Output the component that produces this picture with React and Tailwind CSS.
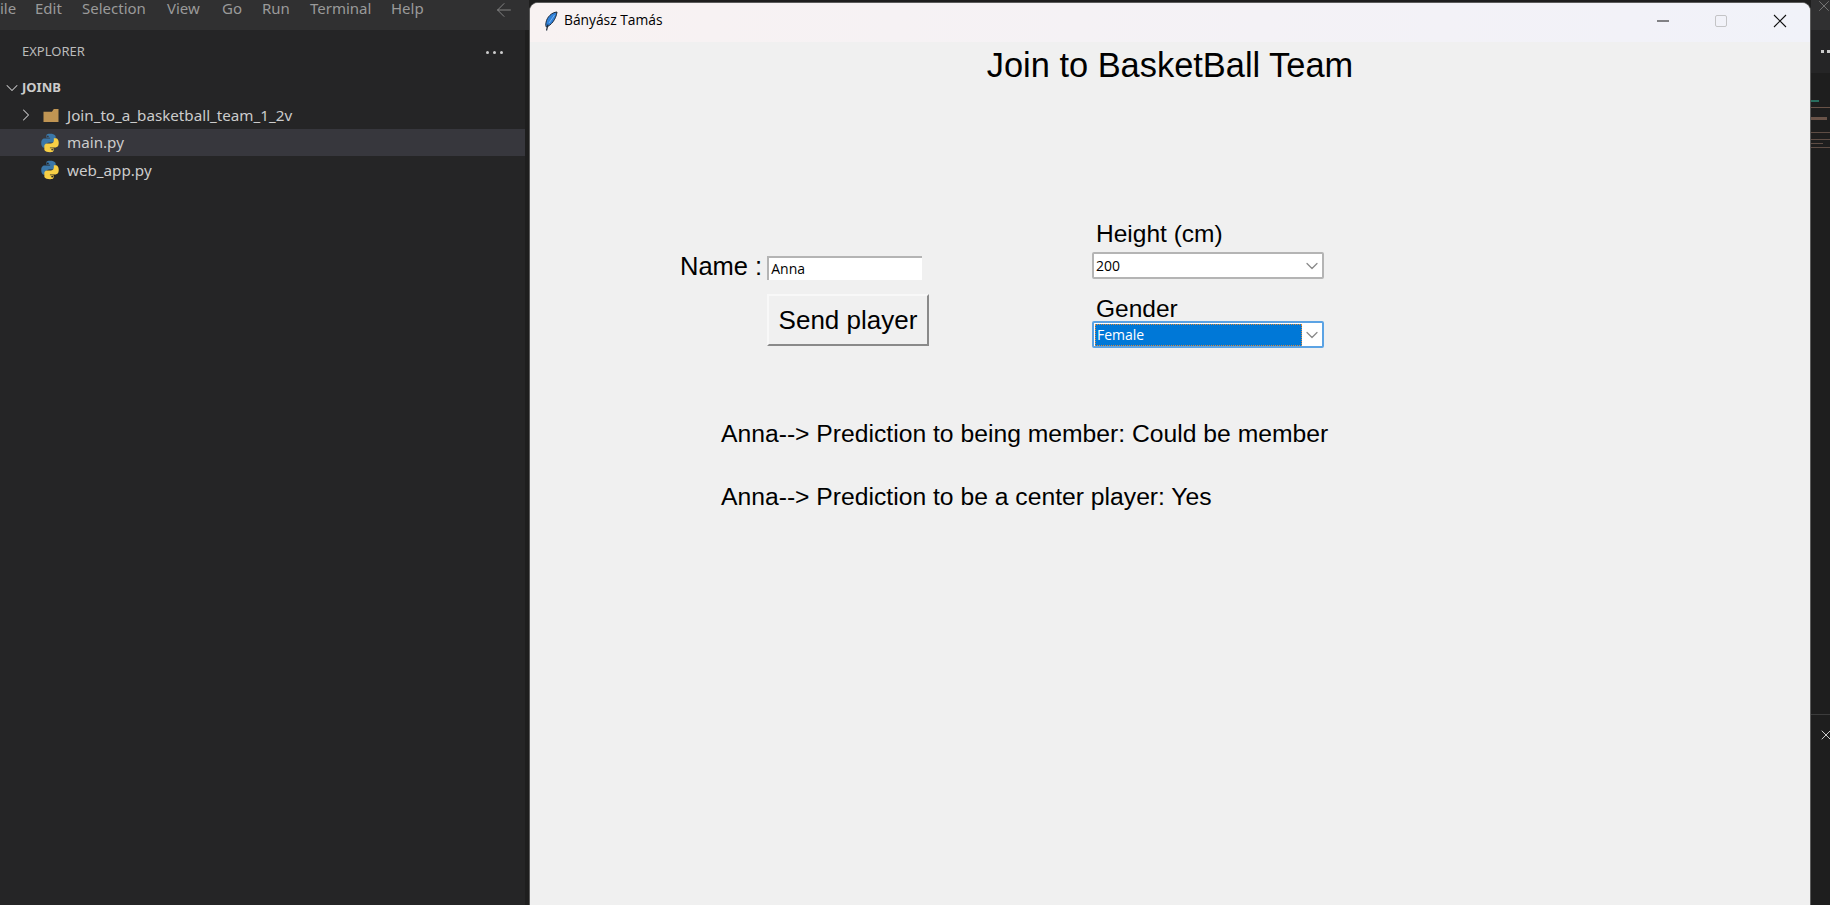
import React from "react";
import { ChevronDown, ChevronRight, ArrowLeft, X } from "lucide-react";

const menus = [
  { label: "ile", cls: "w-[35px]" },
  { label: "Edit", cls: "w-[47px]" },
  { label: "Selection", cls: "w-[85px]" },
  { label: "View", cls: "w-[55px]" },
  { label: "Go", cls: "w-[40px]" },
  { label: "Run", cls: "w-[48px]" },
  { label: "Terminal", cls: "w-[81px]" },
  { label: "Help", cls: "w-[50px]" },
];

function PythonIcon() {
  return (
    <svg viewBox="0 0 24 24" className="w-[20px] h-[20px] shrink-0">
      <path fill="#3b77a8" d="M11.900 1C7.400 1 7.700 3 7.700 3v2.800h4.400v.9H5.800S1.500 6.200 1.500 12s3.700 5.700 3.700 5.700h2.200v-2.800s-.1-3.600 3.500-3.600h4.500s3.400 0 3.400-3.300V4.400S19 1 11.900 1zM9.400 3a1.100 1.100 0 110 2.200 1.100 1.100 0 010-2.200z" />
      <path fill="#f7cf45" d="M12.100 23c4.500 0 4.200-2 4.200-2v-2.800h-4.400v-.9h6.300s4.300.5 4.300-5.300-3.700-5.700-3.700-5.700h-2.200v2.800s.1 3.600-3.500 3.600H8.600s-3.400 0-3.400 3.300v3.600S5 23 12.100 23zm2.500-2a1.100 1.100 0 110-2.200 1.100 1.100 0 010 2.200z" />
    </svg>
  );
}

function FolderIcon() {
  return (
    <svg viewBox="0 0 18 16" className="w-[18px] h-[15px] shrink-0">
      <path fill="#c09553" d="M1 4h9l2-3h5v14H1z" />
    </svg>
  );
}

function FeatherIcon() {
  return (
    <svg viewBox="0 0 14 20" className="w-[14px] h-[20px] shrink-0">
      <path fill="#2f80d8" stroke="#1d2a3a" strokeWidth="1" d="M13 1C7.500 1.500 3 6 2 11.500c-.4 2-.2 3.500.3 4.500C7 14.500 12 8.500 13 1z" />
      <path fill="none" stroke="#8cc2f2" strokeWidth="0.800" d="M10.500 4 5 12" />
      <path fill="none" stroke="#1d2a3a" strokeWidth="1.200" d="M4 13.500 2.500 19.500" />
    </svg>
  );
}

function WindowButtons() {
  return (
    <div className="flex items-center text-black">
      <svg viewBox="0 0 14 14" className="w-[14px] h-[14px]">
        <path d="M1 7h12" stroke="#111" strokeWidth="1" />
      </svg>
      <svg viewBox="0 0 14 14" className="w-[14px] h-[14px] ml-[44px]">
        <rect x="1.500" y="1.500" width="11" height="11" rx="1.500" fill="none" stroke="#c4c4c6" strokeWidth="1" />
      </svg>
      <svg viewBox="0 0 14 14" className="w-[14px] h-[14px] ml-[45px] mr-[23px]">
        <path d="M1 1l12 12M13 1L1 13" stroke="#111" strokeWidth="1.100" />
      </svg>
    </div>
  );
}

function Combo({ value, focused }) {
  return (
    <div
      className={
        "flex items-center w-[232px] h-[27px] rounded-[2px] border-2 bg-white " +
        (focused ? "border-[#5ba3e4]" : "border-[#b4b4b4]")
      }
    >
      {focused ? (
        <div className="flex items-center flex-1 h-[22px] ml-px pl-[1px] bg-[#0078d7] text-white border border-dotted border-[#d98a3d]">
          {value}
        </div>
      ) : (
        <div className="flex-1 pl-[2px] text-black">{value}</div>
      )}
      <ChevronDown className="w-[20px] h-[20px] text-[#8a8a8a]" strokeWidth={1.500} />
    </div>
  );
}

export default function App() {
  return (
    <div className="flex h-[905px] w-[1830px] overflow-hidden bg-[#1e1e1e] font-['Noto_Sans',sans-serif]">
      <div className="flex flex-col w-[529px] shrink-0">
        <div className="flex items-start h-[30px] bg-[#303031] text-[15px] leading-[16px] text-[#9a9a9a] shrink-0">
          {menus.map((m) => (
            <div key={m.label} className={m.cls}>
              {m.label}
            </div>
          ))}
          <ArrowLeft className="w-[22px] h-[22px] ml-[52px] -mt-px text-[#8a8a8a]" strokeWidth={1} />
        </div>
        <div className="flex-1 w-[525px] bg-[#252526] text-[15.200px] text-[#cccccc]">
          <div className="flex items-center justify-between h-[44px] pl-[22px] pr-[22px] text-[13px] text-[#bbbbbb]">
            <span>EXPLORER</span>
            <div className="flex gap-[4px]">
              <span className="w-[3px] h-[3px] rounded-full bg-[#cccccc]" />
              <span className="w-[3px] h-[3px] rounded-full bg-[#cccccc]" />
              <span className="w-[3px] h-[3px] rounded-full bg-[#cccccc]" />
            </div>
          </div>
          <div className="flex items-center h-[27px] font-bold text-[13px] text-[#cccccc]">
            <ChevronDown className="w-[20px] h-[20px] ml-[2px]" strokeWidth={1.250} />
            <span>JOINB</span>
          </div>
          <div className="flex items-center h-[28px]">
            <ChevronRight className="w-[20px] h-[20px] ml-[16px] mr-[6px]" strokeWidth={1.250} />
            <FolderIcon />
            <span className="ml-[7px]">Join_to_a_basketball_team_1_2v</span>
          </div>
          <div className="flex items-center h-[27px] pl-[40px] gap-[7px] bg-[#37373d]">
            <PythonIcon />
            <span>main.py</span>
          </div>
          <div className="flex items-center h-[28px] pl-[40px] gap-[7px]">
            <PythonIcon />
            <span>web_app.py</span>
          </div>
        </div>
      </div>

      <div className="flex flex-col w-[1282px] shrink-0 mt-[2px] rounded-t-[9px] border-x border-t border-[#5c5c5c] overflow-hidden bg-[#f0f0f0] font-['Liberation_Sans',sans-serif] text-black">
        <div className="flex items-center justify-between h-[39px] pb-[4px] shrink-0 bg-linear-to-r from-[#f8f2f2] to-[#f1f2f9]">
          <div className="flex items-center pl-[14px] gap-[6px] text-[13.800px] font-['Open_Sans',sans-serif]">
            <FeatherIcon />
            <span>Bányász Tamás</span>
          </div>
          <WindowButtons />
        </div>

        <h1 className="text-center text-[34.400px] leading-[38px] mt-[4px] font-normal">Join to BasketBall Team</h1>

        <div className="flex mt-[133px] pl-[150px]">
          <div className="w-[412px] pt-[39px]">
            <div className="flex items-center h-[24px] gap-[5px]">
              <span className="text-[25.500px] leading-[24px] -mt-[4px]">Name :</span>
              <div className="flex items-center w-[155px] h-[24px] pl-[2px] pb-[2px] bg-white border-t-2 border-l-2 border-[#b4b4b4] text-[14px] font-['Open_Sans',sans-serif]">
                Anna
              </div>
            </div>
            <button className="block ml-[87px] mt-[14px] w-[162px] h-[52px] text-[26px] border-2 border-t-[#f8f8f8] border-l-[#f8f8f8] border-r-[#8a8a8a] border-b-[#8a8a8a] bg-[#f0f0f0]">
              Send player
            </button>
          </div>
          <div className="pt-[2px] text-[24.500px] leading-[30px]">
            <div className="pl-[4px]">Height (cm)</div>
            <div className="mt-[3px] text-[14px] leading-[20px] font-['Open_Sans',sans-serif]">
              <Combo value="200" />
            </div>
            <div className="pl-[4px] mt-[18px] leading-[24px]">Gender</div>
            <div className="text-[14px] leading-[20px] font-['Open_Sans',sans-serif]">
              <Combo value="Female" focused />
            </div>
          </div>
        </div>

        <div className="mt-[71px] pl-[191px] text-[24.700px] leading-[30px]">
          <p>Anna--&gt; Prediction to being member: Could be member</p>
          <p className="mt-[33px]">Anna--&gt; Prediction to be a center player: Yes</p>
        </div>
      </div>

      <div className="flex flex-col flex-1 min-w-0">
        <div className="h-[30px] shrink-0 bg-[#303031] overflow-hidden">
          <X className="w-[18px] h-[18px] ml-[4px] -mt-[3px] text-[#8a8a8a]" strokeWidth={1} />
        </div>
        <div className="flex items-center gap-[3px] h-[43px] pl-[10px] shrink-0 bg-[#252526]">
          <span className="w-[3px] h-[3px] shrink-0 bg-[#cccccc]" />
          <span className="w-[3px] h-[3px] shrink-0 bg-[#cccccc]" />
        </div>
        <div className="flex-1 bg-[#1e1e1e] overflow-hidden">
          <svg viewBox="0 0 19 80" className="w-[19px] h-[80px] mt-[27px] opacity-70">
            <rect x="0" y="0" width="8" height="2" fill="#2f8f7a" />
            <rect x="0" y="7" width="19" height="1" fill="#8a6a5a" />
            <rect x="0" y="17" width="16" height="3" fill="#8a6a5a" />
            <rect x="0" y="32" width="19" height="1" fill="#7a6256" />
            <rect x="0" y="39" width="19" height="1" fill="#7a6256" />
            <rect x="0" y="43" width="12" height="1" fill="#7a6256" />
            <rect x="0" y="47" width="19" height="1" fill="#7a6256" />
          </svg>
        </div>
        <div className="h-[191px] shrink-0 border-t border-[#3c3c3c] bg-[#1e1e1e] overflow-hidden">
          <X className="w-[16px] h-[16px] ml-[7px] mt-[12px] text-[#cccccc]" strokeWidth={1.500} />
        </div>
      </div>
    </div>
  );
}
